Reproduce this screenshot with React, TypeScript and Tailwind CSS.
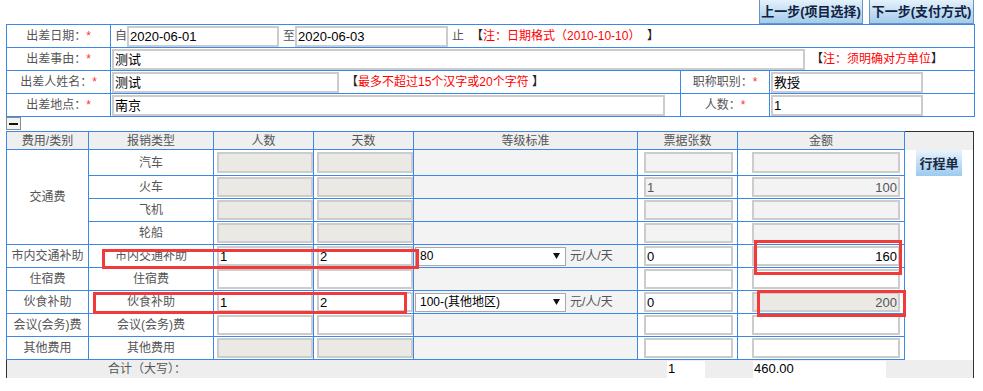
import React from "react";

const BLUE = "bg-[#3b88e8]";

function Star() {
  return <span className="text-[#ff3333]">*</span>;
}

function Label({ children }: { children: React.ReactNode }) {
  return (
    <div className="bg-white flex items-center justify-center text-[12px] text-[#555]">
      {children}
      <Star />
    </div>
  );
}

function Box({
  cls,
  text = "",
  right = false,
  tc = "text-black",
}: {
  cls: string;
  text?: string;
  right?: boolean;
  tc?: string;
}) {
  return (
    <div
      className={`border-2 border-[#cccccc] flex items-center text-[13px] leading-none overflow-hidden whitespace-nowrap ${
        right ? "justify-end pr-[1px]" : "pl-[1px]"
      } ${tc} ${cls}`}
    >
      {text}
    </div>
  );
}

function Cell({ children, cls = "bg-white" }: { children?: React.ReactNode; cls?: string }) {
  return <div className={`flex items-center ${cls}`}>{children}</div>;
}

function TextCell({ children }: { children: React.ReactNode }) {
  return (
    <div className="bg-white flex items-center justify-center text-[12px] text-[#555] whitespace-nowrap">
      {children}
    </div>
  );
}

function Sel({ text }: { text: string }) {
  return (
    <div className="flex items-center">
      <div className="ml-[1px] w-[151px] h-[19px] border border-[#a9a9a9] bg-white flex items-center justify-between pl-[4px] pr-[5px] text-[12px] text-black">
        <span>{text}</span>
        <svg width="7" height="6" viewBox="0 0 7 6">
          <polygon points="0,0 7,0 3.5,6" fill="#111" />
        </svg>
      </div>
      <span className="ml-[4px] text-[12px] text-[#555]">元/人/天</span>
    </div>
  );
}

type Row = {
  cat?: string;
  type: string;
  dis: boolean;
  p?: string;
  d?: string;
  sel?: string;
  ticket?: string;
  ticketBg: string;
  ticketTc?: string;
  amt?: string;
  amtBg: string;
  amtTc?: string;
};

const rows: Row[] = [
  { type: "汽车", dis: true, ticketBg: "bg-[#f3f3f3]", amtBg: "bg-[#f3f3f3]" },
  { type: "火车", dis: true, ticket: "1", ticketBg: "bg-[#f3f3f3]", ticketTc: "text-[#555]", amt: "100", amtBg: "bg-[#f3f3f3]", amtTc: "text-[#555]" },
  { type: "飞机", dis: true, ticketBg: "bg-[#f3f3f3]", amtBg: "bg-[#f3f3f3]" },
  { type: "轮船", dis: true, ticketBg: "bg-[#f3f3f3]", amtBg: "bg-[#f3f3f3]" },
  { cat: "市内交通补助", type: "市内交通补助", dis: false, p: "1", d: "2", sel: "80", ticket: "0", ticketBg: "bg-white", amt: "160", amtBg: "bg-white" },
  { cat: "住宿费", type: "住宿费", dis: false, ticketBg: "bg-white", amtBg: "bg-white" },
  { cat: "伙食补助", type: "伙食补助", dis: false, p: "1", d: "2", sel: "100-(其他地区)", ticket: "0", ticketBg: "bg-white", amt: "200", amtBg: "bg-[#ebe9e4]", amtTc: "text-[#555]" },
  { cat: "会议(会务)费", type: "会议(会务)费", dis: false, ticketBg: "bg-white", amtBg: "bg-white" },
  { cat: "其他费用", type: "其他费用", dis: true, ticketBg: "bg-white", amtBg: "bg-white" },
];

export default function App() {
  return (
    <div className="relative w-[983px] h-[391px] bg-white overflow-hidden font-['Liberation_Sans','Noto_Sans_CJK_SC',sans-serif] text-[12px] text-[#555]">
      {/* top buttons */}
      <div className="flex justify-end gap-[6px] h-[24px] pr-[9px]">
        <button className="w-[104px] h-[24px] border border-t-0 border-[#6d93c4] bg-linear-to-b from-[#e4f1fb] to-[#a3cbec] text-[13px] font-bold text-[#10223f] leading-none">
          上一步(项目选择)
        </button>
        <button className="w-[105px] h-[24px] border border-t-0 border-[#6d93c4] bg-linear-to-b from-[#e4f1fb] to-[#a3cbec] text-[13px] font-bold text-[#10223f] leading-none">
          下一步(支付方式)
        </button>
      </div>

      {/* top info table */}
      <div className={`ml-[6px] w-[969px] grid grid-cols-[103px_569px_88px_204px] grid-rows-[22px_22px_22px_22px] gap-px p-px ${BLUE}`}>
        <Label>出差日期：</Label>
        <div className="col-span-3 bg-white flex items-center whitespace-nowrap">
          <span className="ml-[4px]">自</span>
          <Box cls="w-[152px] h-[21px]" text="2020-06-01" />
          <span className="ml-[4px]">至</span>
          <Box cls="w-[153px] h-[21px]" text="2020-06-03" />
          <span className="ml-[4px]">止</span>
          <span className="ml-[7px] text-[#222]">【</span>
          <span className="text-[#ff0000]">注：日期格式（2010-10-10）</span>
          <span className="text-[#222]">&nbsp;&nbsp;】</span>
        </div>

        <Label>出差事由：</Label>
        <div className="col-span-3 bg-white flex items-center whitespace-nowrap">
          <Box cls="ml-[1px] w-[693px] h-[21px]" text="测试" />
          <span className="ml-[6px] text-[#222]">【</span>
          <span className="text-[#ff0000]">注：须明确对方单位</span>
          <span className="text-[#222]">】</span>
        </div>

        <Label>出差人姓名：</Label>
        <div className="bg-white flex items-center whitespace-nowrap">
          <Box cls="ml-[1px] w-[227px] h-[21px]" text="测试" />
          <span className="ml-[7px] text-[#222]">【</span>
          <span className="text-[#ff0000]">最多不超过15个汉字或20个字符</span>
          <span className="text-[#222]">&nbsp;】</span>
        </div>
        <Label>职称职别：</Label>
        <div className="bg-white flex items-center">
          <Box cls="ml-[1px] w-[152px] h-[21px]" text="教授" />
        </div>

        <Label>出差地点：</Label>
        <div className="bg-white flex items-center">
          <Box cls="ml-[1px] w-[553px] h-[21px]" text="南京" />
        </div>
        <Label>人数：</Label>
        <div className="bg-white flex items-center">
          <Box cls="ml-[1px] w-[152px] h-[21px]" text="1" />
        </div>
      </div>

      {/* collapse toggle */}
      <div className="h-[14px] pl-[6px]">
        <div className="w-[15px] h-[13px] border border-[#8a8a8a] bg-[#f2f2f2] flex items-center justify-center">
          <div className="w-[9px] h-[2px] bg-[#111]" />
        </div>
      </div>

      {/* expense table */}
      <div className="ml-[6px] flex">
        <div
          className={`w-[899px] grid grid-cols-[81px_124px_99px_99px_223px_99px_166px] grid-rows-[17px_25px_22px_22px_22px_22px_22px_22px_22px_22px] gap-px p-px ${BLUE}`}
        >
          {["费用/类别", "报销类型", "人数", "天数", "等级标准", "票据张数", "金额"].map((h) => (
            <div key={h} className="bg-[#efefef] flex items-center justify-center text-[12px] text-[#555]">
              {h}
            </div>
          ))}

          {rows.map((r, i) => (
            <React.Fragment key={r.type}>
              {i === 0 && (
                <div className="row-span-4 bg-white flex items-center justify-center text-[12px] text-[#555]">交通费</div>
              )}
              {r.cat && <TextCell>{r.cat}</TextCell>}
              <TextCell>{r.type}</TextCell>
              <Cell>
                <Box
                  cls={`ml-[3px] w-[96px] ${i === 0 ? "h-[21px]" : "h-[20px]"} ${r.dis ? "bg-[#ebe9e4]" : "bg-white"}`}
                  text={r.p}
                />
              </Cell>
              <Cell>
                <Box
                  cls={`ml-[3px] w-[96px] ${i === 0 ? "h-[21px]" : "h-[20px]"} ${r.dis ? "bg-[#ebe9e4]" : "bg-white"}`}
                  text={r.d}
                />
              </Cell>
              <Cell cls="bg-[#f3f3f3]">{r.sel && <Sel text={r.sel} />}</Cell>
              <Cell>
                <Box
                  cls={`ml-[6px] w-[89px] ${i === 0 ? "h-[21px]" : "h-[20px]"} ${r.ticketBg}`}
                  text={r.ticket}
                  tc={r.ticketTc ?? "text-black"}
                />
              </Cell>
              <Cell>
                <Box
                  cls={`ml-[14px] w-[148px] ${i === 0 ? "h-[21px]" : "h-[20px]"} ${r.amtBg}`}
                  text={r.amt}
                  right
                  tc={r.amtTc ?? "text-black"}
                />
              </Cell>
            </React.Fragment>
          ))}
        </div>

        {/* itinerary column */}
        <div className="w-[69px] border-t border-r border-[#333] flex flex-col">
          <div className="h-[18px] bg-[#efefef]" />
          <div className="flex justify-center">
            <button className="w-[46px] h-[26px] bg-linear-to-b from-[#e8f3fc] to-[#9ccaf0] text-[13px] font-bold text-[#1a2a40] leading-none">
              行程单
            </button>
          </div>
        </div>
      </div>

      {/* total row */}
      <div className="ml-[6px] w-[968px] h-[18px] border-l border-r border-[#333] bg-[#eeeeee] flex items-center whitespace-nowrap">
        <span className="ml-[101px] w-[559px] text-[12px] text-[#555]">合计（大写）：</span>
        <div className="w-[38px] h-[17px] bg-white flex items-center pl-[1px] text-[13px] text-black">1</div>
        <div className="ml-[48px] w-[133px] h-[17px] bg-white flex items-center pl-[1px] text-[13px] text-black">460.00</div>
      </div>

      {/* red annotation boxes */}
      <div className="absolute left-[102px] top-[249px] w-[317px] h-[20px] border-[3px] border-[#f23a3a]" />
      <div className="absolute left-[93px] top-[292px] w-[314px] h-[22px] border-[3px] border-[#f23a3a]" />
      <div className="absolute left-[754px] top-[240px] w-[148px] h-[35px] border-[3px] border-[#f23a3a]" />
      <div className="absolute left-[757px] top-[290px] w-[149px] h-[27px] border-[3px] border-[#f23a3a]" />
    </div>
  );
}
